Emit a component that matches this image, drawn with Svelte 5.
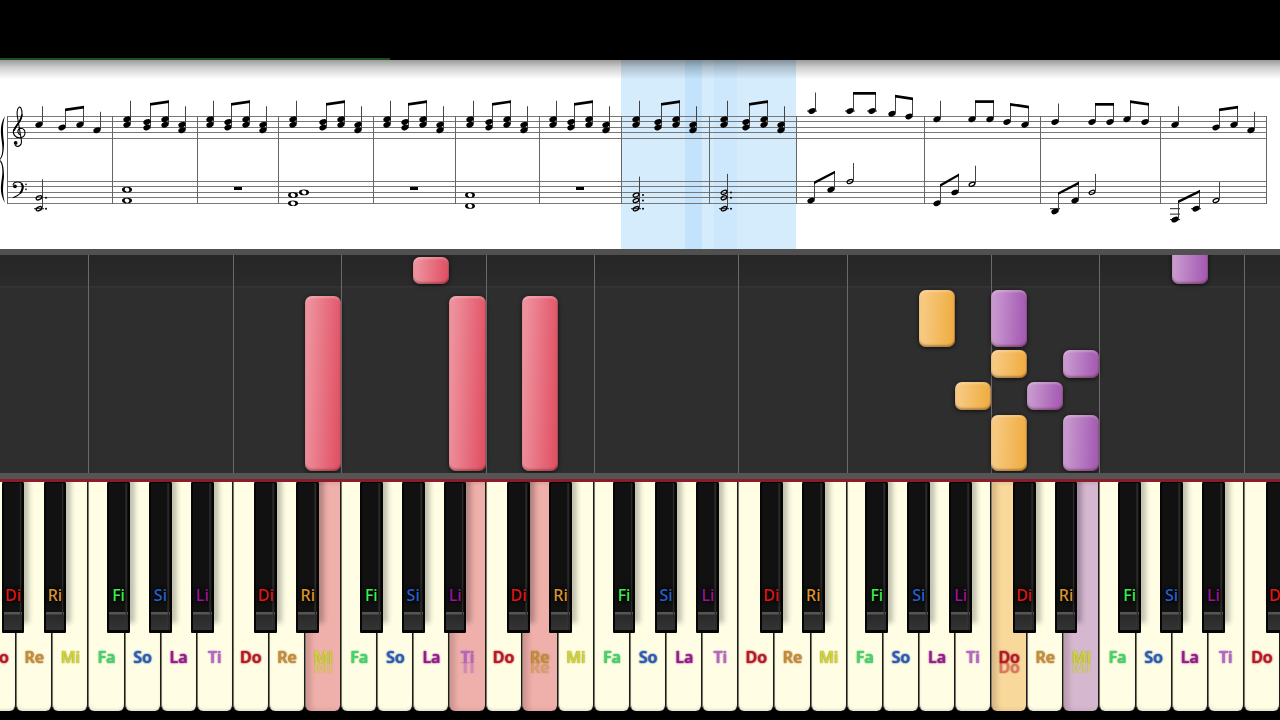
<script lang="ts">
  type Note = { x: number; steps: number[]; half?: boolean; dotted?: boolean };

  const names = ["Do", "Re", "Mi", "Fa", "So", "La", "Ti"];
  const sharps: Record<string, string> = {
    Do: "Di",
    Re: "Ri",
    Fa: "Fi",
    So: "Si",
    La: "Li",
  };
  const pressed: Record<number, string> = {
    9: "red",
    13: "red",
    15: "red",
    28: "gold",
    30: "purple",
  };
  const keys = Array.from({ length: 36 }, (_, i) => ({
    name: names[i % 7],
    sharp: sharps[names[i % 7]],
    pressed: pressed[i] || "",
  }));

  // falling notes, lane is the white key index
  const falling = [
    { lane: 9, top: 41, height: 175, color: "red" },
    { lane: 12, top: 2, height: 27, color: "red" },
    { lane: 13, top: 41, height: 175, color: "red" },
    { lane: 15, top: 41, height: 175, color: "red" },
    { lane: 26, top: 35, height: 57, color: "gold" },
    { lane: 27, top: 127, height: 28, color: "gold" },
    { lane: 28, top: 35, height: 57, color: "purple" },
    { lane: 28, top: 95, height: 28, color: "gold" },
    { lane: 28, top: 160, height: 56, color: "gold" },
    { lane: 29, top: 127, height: 28, color: "purple" },
    { lane: 30, top: 95, height: 28, color: "purple" },
    { lane: 30, top: 160, height: 56, color: "purple" },
    { lane: 33, top: -10, height: 39, color: "purple" },
  ];

  // score
  const trebleLines = [57.5, 62.5, 68.5, 73.5, 79.5];
  const bassLines = [122.5, 127.5, 133.5, 138.5, 144.5];
  const bars = [7.5, 112.5, 197.5, 278.5, 373.5, 455.5, 539.5, 621.5, 709.5, 796.5, 924.5, 1040.5, 1160.5, 1266.5];
  const trebleY = (s: number) => 57.5 + s * 2.75;
  const bassY = (s: number) => 122.5 + s * 2.72;

  const one = (x: number, s: number): Note => ({ x, steps: [s] });

  let treble: Note[] = [
    one(39, 3), one(62, 4), one(80, 3), one(97, 5),
    one(812, -2), one(850, -2), one(872, -2), one(892, -1), one(909, 0),
    one(937, 1), one(972, 1), one(990, 1), one(1007, 2), one(1025, 3),
    one(1055, 2), one(1092, 2), one(1110, 2), one(1127, 1), one(1145, 2),
    one(1175, 3), one(1216, 4), one(1234, 3), one(1251, 5),
  ];
  // [x1, step1, x2, step2]
  let trebleBeams = [
    [62, 4, 80, 3], [850, -2, 872, -2], [892, -1, 909, 0],
    [972, 1, 990, 1], [1007, 2, 1025, 3], [1092, 2, 1110, 2],
    [1127, 1, 1145, 2], [1216, 4, 1234, 3],
  ];
  // the repeated figure: first chord, then three more
  const figure = [[127, 147], [210, 228], [293, 323], [387, 405], [470, 489], [553, 571], [636, 658], [724, 746]];
  for (const [a, b] of figure) {
    treble.push(
      { x: a, steps: [1, 3] },
      { x: b, steps: [2, 4] },
      { x: b + 18, steps: [1, 3] },
      { x: b + 35, steps: [3, 5] },
    );
    trebleBeams.push([b, 2, b + 18, 1]);
  }

  const bass: Note[] = [
    { x: 39, steps: [6, 10], half: true, dotted: true },
    { x: 636, steps: [5, 7, 10], half: true, dotted: true },
    { x: 724, steps: [4, 6, 10], half: true, dotted: true },
    one(811, 7), one(831, 3), { x: 850, steps: [0], half: true },
    one(937, 8), one(955, 4), { x: 972, steps: [1], half: true },
    one(1055, 11), one(1075, 7), { x: 1092, steps: [4], half: true },
    one(1175, 14), one(1196, 10), { x: 1216, steps: [7], half: true },
  ];
  const bassBeams = [[811, 7, 831, 3], [937, 8, 955, 4], [1055, 11, 1075, 7], [1175, 14, 1196, 10]];
  const wholes = [[127, 3], [127, 7], [293, 5], [293, 8], [304, 4], [470, 5], [470, 9]];
  const rests = [238, 414, 580];
  const ledgers = [
    [39, 10], [636, 10], [724, 10], [1055, 10],
    [1175, 10], [1175, 12], [1175, 14], [1196, 10],
  ];
</script>

{#snippet notes(list: Note[], beams: number[][], y: (s: number) => number)}
  {#each list as n}
    <line class="stem" x1={n.x + 3.5} x2={n.x + 3.5} y1={y(Math.min(...n.steps)) - 18.5} y2={y(Math.max(...n.steps)) - 1} />
    {#each n.steps as s}
      <ellipse
        class={n.half ? "hollow" : "head"}
        cx={n.x}
        cy={y(s)}
        rx={n.half ? 3 : 3.8}
        ry={n.half ? 1.8 : 2.6}
        transform="rotate(-24 {n.x} {y(s)})"
      />
      {#if n.dotted}
        <circle cx={n.x + 7} cy={y(s)} r="1" />
      {/if}
    {/each}
  {/each}
  {#each beams as [x1, s1, x2, s2]}
    <polygon
      points="{x1 + 3},{y(s1) - 19} {x2 + 4},{y(s2) - 19} {x2 + 4},{y(s2) - 16.3} {x1 + 3},{y(s1) - 16.3}"
    />
  {/each}
{/snippet}

<main>
  <header class="top"><div class="progress"></div></header>

  <section class="score">
    <svg viewBox="0 1 1280 189" role="img" aria-label="Score">
      <defs>
        <linearGradient id="shade" x1="0" y1="0" x2="0" y2="1">
          <stop offset="0" stop-color="#000" stop-opacity="0.42" />
          <stop offset="0.4" stop-color="#000" stop-opacity="0.2" />
          <stop offset="1" stop-color="#000" stop-opacity="0" />
        </linearGradient>
      </defs>
      <rect x="621" y="0" width="175" height="190" fill="#d5ecfc" />
      <rect x="685" y="0" width="17" height="190" fill="#c2e3fb" />
      <rect x="714" y="0" width="23" height="190" fill="#cde8fc" />
      <rect width="1280" height="20" fill="url(#shade)" />

      {#each [...trebleLines, ...bassLines] as y}
        <line class="staff" x1="7" x2="1267" y1={y} y2={y} />
      {/each}
      {#each bars as x}
        <line class="bar" x1={x} x2={x} y1="57" y2="145" />
      {/each}

      <!-- brace -->
      <path
        d="M5 57C-1 66 1 76 2 84C3 92 2 98-1 101C2 104 3 110 2 118C1 126-1 134 5 144C2 134 3 126 4 118C4 109 3 103 0 101C3 98 4 92 4 84C3 76 2 67 5 57Z"
      />
      <!-- clefs -->
      <g transform="translate(0 -9) scale(0.3333)" fill="none" stroke="#000" stroke-width="3.2">
        <path
          d="M60 254C50 249 53 235 62 235C79 236 80 262 60 263C44 264 36 250 42 238C48 223 67 213 66 191C66 178 62 169 57 172C49 178 51 196 54 210L64 270C67 290 50 293 45 284"
        />
        <path d="M42 242C47 227 64 215 66 193" stroke-width="5" />
        <circle cx="47" cy="279" r="4" fill="#000" />
        <path d="M39 406C40 393 66 391 69 409C70 426 56 437 39 443" />
        <path d="M64 400C72 409 67 423 60 430" stroke-width="6" />
        <circle cx="45" cy="409" r="4" fill="#000" />
        <circle cx="78" cy="403" r="1" />
        <circle cx="78" cy="418" r="1" />
      </g>

      {#each [812, 850, 872] as x}
        <line class="ledger" x1={x - 5} x2={x + 5} y1="52" y2="52" />
      {/each}
      {#each ledgers as [x, s]}
        <line class="ledger" x1={x - 5} x2={x + 5} y1={bassY(s)} y2={bassY(s)} />
      {/each}
      {@render notes(treble, trebleBeams, trebleY)}
      {@render notes(bass, bassBeams, bassY)}
      {#each wholes as [x, s]}
        <ellipse cx={x} cy={bassY(s)} rx="5" ry="2.8" />
        <ellipse cx={x} cy={bassY(s)} rx="2.4" ry="2" fill="#fff" transform="rotate(20 {x} {bassY(s)})" />
      {/each}
      {#each rests as x}
        <rect x={x - 4} y="128" width="8" height="3" />
      {/each}
    </svg>
  </section>

  <section class="roll">
    {#each keys as key, i}
      <div class="lane" class:line={key.name === "Do" || key.name === "Fa"}>
        {#each falling.filter((n) => n.lane === i) as n}
          <div class="note {n.color}" style="top: {n.top}px; height: {n.height}px"></div>
        {/each}
      </div>
    {/each}
  </section>

  <section class="keyboard">
    {#each keys as key}
      <div class="slot">
        <button class="white {key.name} {key.pressed}" type="button">
          <span class="label">{key.name}</span>
          {#if key.pressed}
            <span class="ghost" aria-hidden="true">{key.name}</span>
          {/if}
        </button>
        {#if key.sharp}
          <button class="black {key.sharp}" type="button"><span>{key.sharp}</span></button>
        {/if}
      </div>
    {/each}
  </section>
</main>

<style>
  :global(body) {
    background: #000;
  }
  main {
    overflow: hidden;
    background: #000;
    font-family: "Noto Sans", "Open Sans", sans-serif;
  }
  .top {
    height: 60px;
    display: flex;
    align-items: flex-end;
    background: #000;
  }
  .progress {
    width: 30.5%;
    height: 2px;
    background: #1c4f1b;
  }

  .score {
    background: #fff;
  }
  .score svg {
    display: block;
    width: 100%;
    height: auto;
  }
  .staff {
    stroke: #777;
  }
  .bar {
    stroke: #666;
  }
  .stem {
    stroke: #444;
  }
  .ledger {
    stroke: #222;
  }
  .hollow {
    fill: none;
    stroke: #000;
    stroke-width: 1.3;
  }

  .roll {
    display: flex;
    justify-content: flex-end;
    height: 218px;
    overflow: hidden;
    border-top: 6px solid #505050;
    background: linear-gradient(#262626, #2b2b2b 31px, #353535 31px, #353535 32px, #2e2e2e 33px);
  }
  .lane {
    position: relative;
    flex: 0 0 2.822%;
    box-sizing: border-box;
  }
  .line::before {
    content: "";
    position: absolute;
    left: 0;
    width: 1px;
    height: 100%;
    background: #6a6a6a;
  }
  .note {
    position: absolute;
    left: 0;
    right: 0;
    border-radius: 7px;
    box-shadow:
      inset 0 2px 2px rgba(255, 255, 255, 0.25),
      inset 0 -2px 2px rgba(70, 30, 30, 0.35),
      inset -1px 0 1px rgba(70, 30, 30, 0.3),
      0 1px 4px rgba(0, 0, 0, 0.7);
  }
  .note.red {
    background: linear-gradient(92deg, #ee919d 10%, #e15467 90%);
  }
  .note.gold {
    background: linear-gradient(92deg, #f7ca82 10%, #f0ae45 90%);
  }
  .note.purple {
    background: linear-gradient(92deg, #c898cf 10%, #a65db4 90%);
  }

  .keyboard {
    display: flex;
    justify-content: flex-end;
    height: 229px;
    overflow: hidden;
    border-top: 3px solid #8c1c2c;
    border-bottom: 9px solid #000;
    box-shadow: 0 -6px #555;
    margin-top: 6px;
  }
  .slot {
    position: relative;
    flex: 0 0 2.822%;
  }
  button {
    font-family: inherit;
    font-size: 16px;
    line-height: 20px;
    margin: 0;
    border: 0;
    cursor: pointer;
  }
  .white {
    position: relative;
    display: flex;
    flex-direction: column;
    align-items: center;
    width: 100%;
    height: 100%;
    padding: 165px 0 0;
    border-right: 1px solid #1c1c18;
    border-left: 1px solid #77776a;
    border-radius: 0 0 6px 6px;
    background: #fffee5;
    box-shadow: inset 0 -2px 2px rgba(0, 0, 0, 0.1);
    font-weight: 600;
  }
  .white.red {
    background: #efafaa;
  }
  .white.gold {
    background: #f8d99b;
  }
  .white.purple {
    background: #d5b8d0;
  }
  .white.red,
  .white.gold,
  .white.purple {
    box-shadow: inset 5px 0 5px rgba(90, 50, 50, 0.2);
  }
  .label,
  .ghost {
    text-shadow: 0 0 1px #5559, 0 0 2px currentColor;
  }
  .ghost {
    position: absolute;
    top: 175px;
    opacity: 0.5;
    clip-path: inset(5px -2px 3px);
  }
  .black {
    position: absolute;
    z-index: 1;
    top: -1px;
    width: 63%;
    height: 152px;
    padding: 76px 0 0;
    box-sizing: border-box;
    border: 2px solid #050505;
    border-bottom-width: 3px;
    border-radius: 3px 3px 1px 1px;
    background: linear-gradient(90deg, transparent 86%, #3a3a3a 88%, #222 94%, transparent 96%),
      linear-gradient(#111 129px, #555 129px, #555 131px, #292929 132px, #333 146px);
    box-shadow: 5px -10px 5px rgba(0, 0, 0, 0.24);
    font-weight: 500;
  }
  .black span {
    display: flex;
    justify-content: center;
    text-shadow: 0 0 3px #000, 0 0 5px #000;
  }
  .Di {
    left: 60%;
    color: #e01515;
  }
  .Ri {
    left: 76%;
    color: #dd942c;
  }
  .Fi {
    left: 52%;
    color: #38f04c;
  }
  .Si {
    left: 68%;
    color: #2462d2;
  }
  .Li {
    left: 84%;
    color: #a0129a;
  }
  .Do {
    color: #bd1525;
  }
  .Re {
    color: #c98d37;
  }
  .Mi {
    color: #d3d33a;
  }
  .Fa {
    color: #45d467;
  }
  .So {
    color: #2a5bb5;
  }
  .La {
    color: #9c1790;
  }
  .Ti {
    color: #b964c6;
  }
</style>
